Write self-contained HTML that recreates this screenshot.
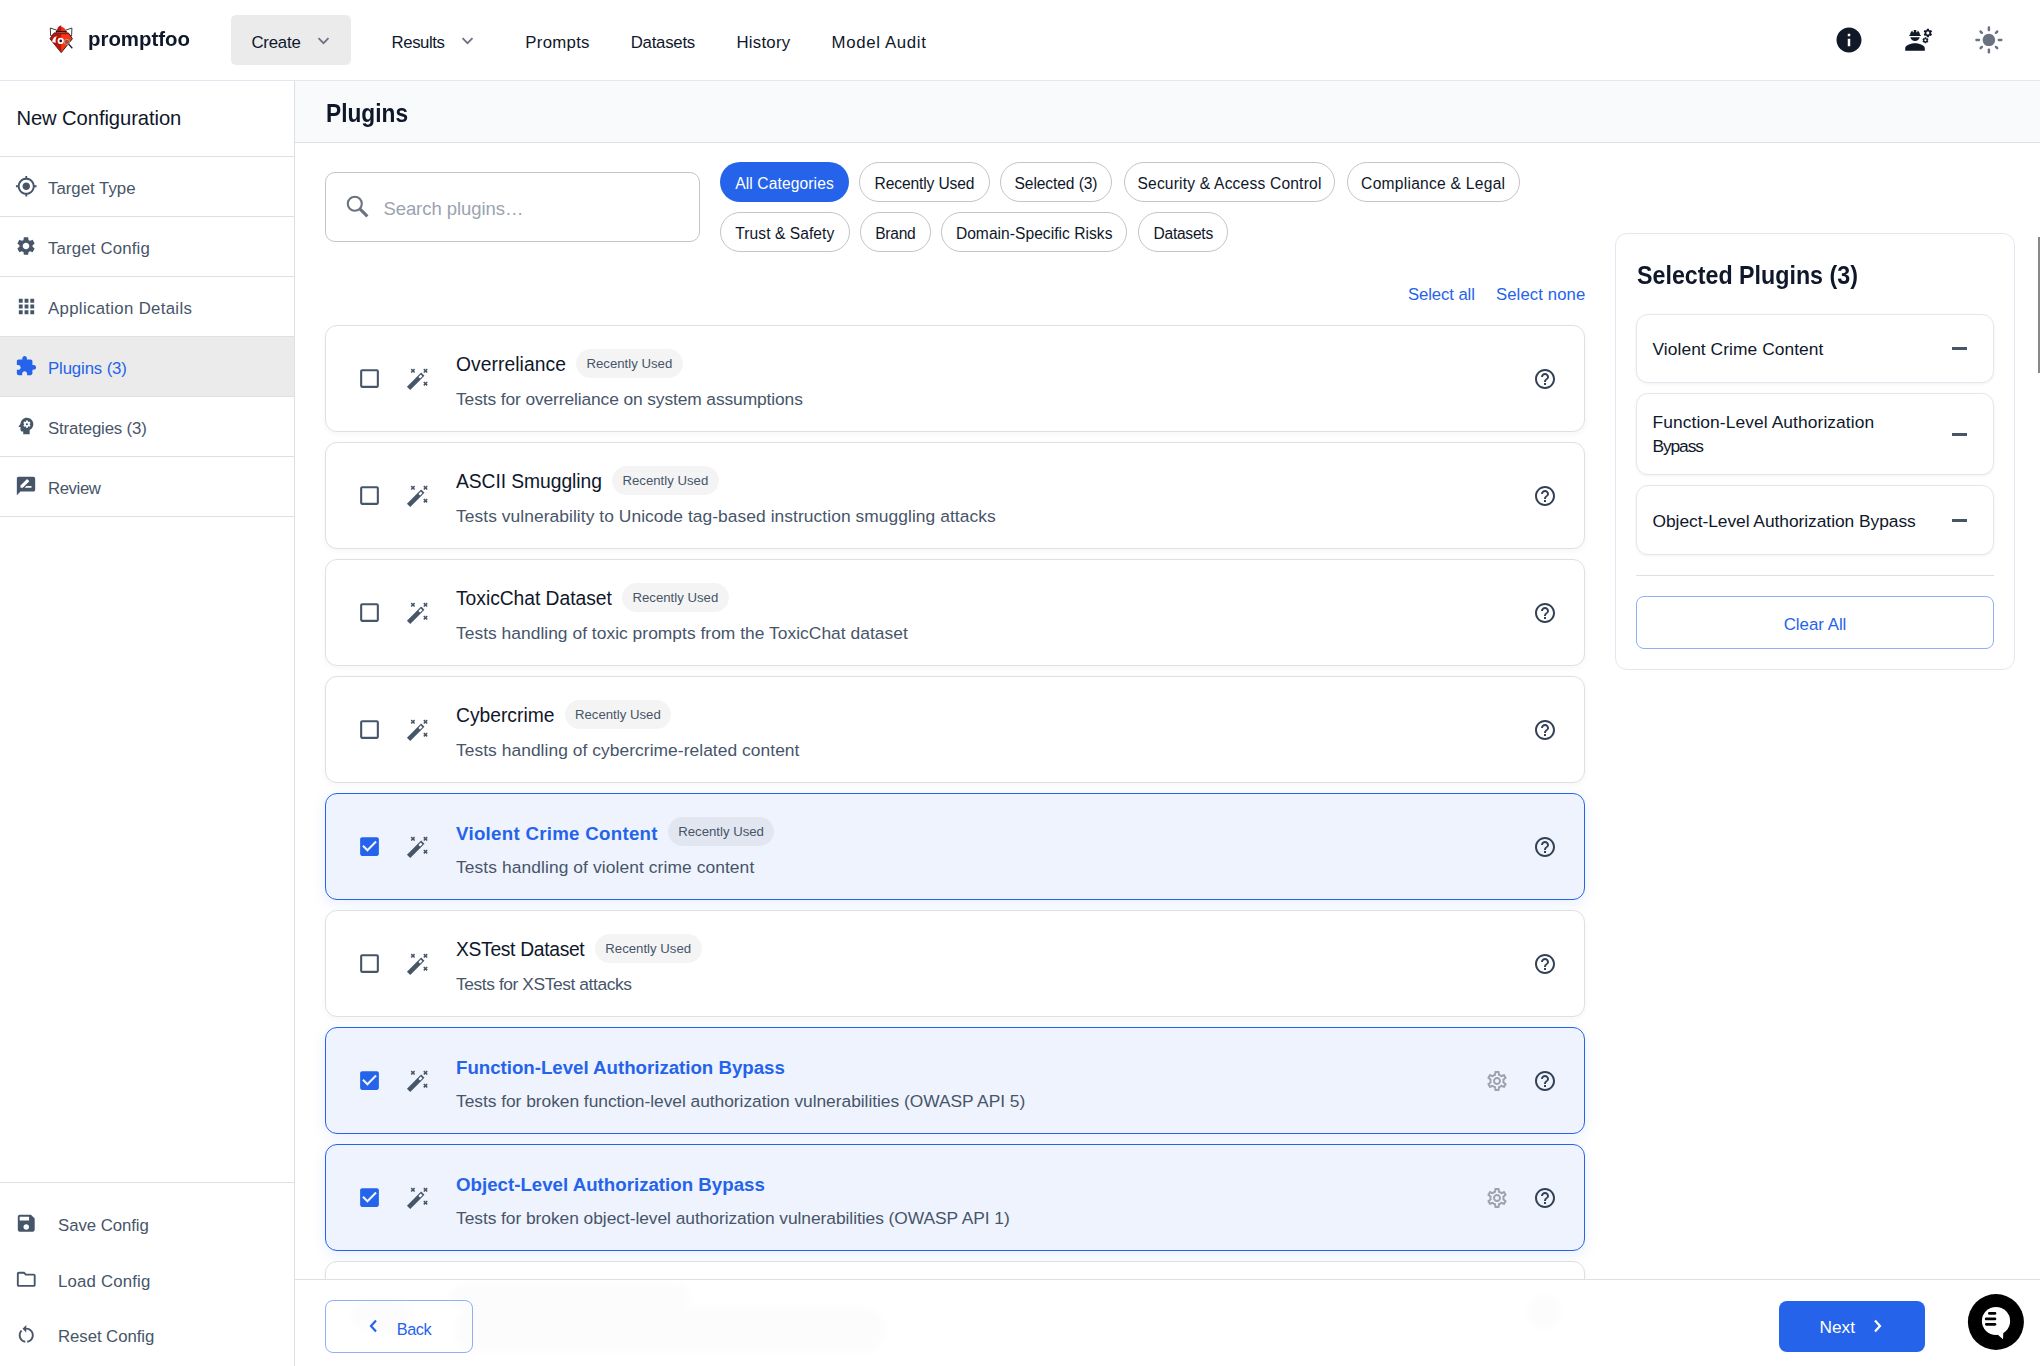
<!DOCTYPE html>
<html><head><meta charset="utf-8"><title>promptfoo</title>
<style>
html,body{margin:0;padding:0;}
body{width:2040px;height:1366px;overflow:hidden;position:relative;background:#fff;font-family:"Liberation Sans",sans-serif;}
.t{position:absolute;white-space:nowrap;}
.b{position:absolute;}
.i{position:absolute;overflow:visible;}
.badge{position:absolute;height:29px;line-height:29px;padding:0 10.5px;border-radius:14.5px;background:rgba(0,0,0,0.045);color:#475569;font-size:13.2px;white-space:nowrap;box-sizing:border-box;}
</style></head><body>
<div class="b" style="left:0px;top:0px;width:2040px;height:80px;background:#fff;"></div>
<div class="b" style="left:0px;top:80px;width:2040px;height:1px;background:#e2e8f0;"></div>
<svg class="i" style="left:45px;top:22px;width:35px;height:34px" viewBox="0 0 35 34">
<path d="M5.3 6 L11.8 8.2 L11.5 13.5 L5.6 13.8 Z" fill="#fff" stroke="#2a2a2a" stroke-width="0.9"/>
<path d="M26.9 6 L20.6 8.2 L20.9 13.5 L26.6 13.8 Z" fill="#fff" stroke="#2a2a2a" stroke-width="0.9"/>
<path d="M5 16.8 L8.5 11.6 L24 11.6 L27.4 16.8 L16.2 30.6 Z" fill="#ff3312" stroke="#151515" stroke-width="0.9"/>
<path d="M5 16.8 L8.5 11.6 L16.2 11.6 L16.2 30.6 Z" fill="#b8160c"/>
<path d="M12 9.6 C12 3.6 20.8 3.6 20.8 9.6 Z" fill="#ff2a0a"/>
<path d="M12 9.6 C12 3.6 16.4 3.6 16.4 3.6 L16.4 9.6 Z" fill="#b3180f"/>
<rect x="10.8" y="9.1" width="11" height="1.3" fill="#111"/>
<rect x="9" y="10.4" width="14.5" height="1.6" fill="#8a1a12"/>
<path d="M7.2 20 C7.6 16 10 14.5 12 14.3 C10.5 16.5 10.3 18.5 10.8 20.8 Z" fill="#fff"/>
<circle cx="15.7" cy="18.9" r="3.1" fill="#fff"/>
<circle cx="15.7" cy="18.9" r="1.3" fill="#151515"/>
<circle cx="21.9" cy="19.9" r="2.6" fill="#c04020" stroke="#9aa" stroke-width="0.9"/>
<path d="M23.6 22 L27.3 26.2" stroke="#222" stroke-width="1.3"/>
</svg>
<div class="t " style="left:88.00px;top:26.39px;font-size:21px;line-height:26.25px;color:#0f172a;font-weight:700;transform:scaleX(0.9714);transform-origin:0 0;">promptfoo</div>
<div class="b" style="left:231px;top:15px;width:120px;height:50px;background:#ebebeb;border-radius:5px;"></div>
<div class="t " style="left:251.40px;top:31.68px;font-size:16.8px;line-height:21.0px;color:#0f172a;font-weight:400;letter-spacing:-0.200px;">Create</div>
<svg class="i" style="left:317px;top:36.5px;width:13px;height:8px" viewBox="0 0 13 8"><path d="M1.5 1.2 L6.5 6.2 L11.5 1.2" fill="none" stroke="#6b7280" stroke-width="1.8"/></svg>
<div class="t " style="left:391.60px;top:31.68px;font-size:16.8px;line-height:21.0px;color:#0f172a;font-weight:400;letter-spacing:-0.438px;">Results</div>
<svg class="i" style="left:461px;top:36.5px;width:13px;height:8px" viewBox="0 0 13 8"><path d="M1.5 1.2 L6.5 6.2 L11.5 1.2" fill="none" stroke="#6b7280" stroke-width="1.8"/></svg>
<div class="t " style="left:525.30px;top:31.68px;font-size:16.8px;line-height:21.0px;color:#0f172a;font-weight:400;letter-spacing:0.287px;">Prompts</div>
<div class="t " style="left:630.70px;top:31.68px;font-size:16.8px;line-height:21.0px;color:#0f172a;font-weight:400;letter-spacing:-0.239px;">Datasets</div>
<div class="t " style="left:736.40px;top:31.68px;font-size:16.8px;line-height:21.0px;color:#0f172a;font-weight:400;letter-spacing:0.259px;">History</div>
<div class="t " style="left:831.50px;top:31.68px;font-size:16.8px;line-height:21.0px;color:#0f172a;font-weight:400;letter-spacing:0.662px;">Model Audit</div>
<svg class="i" style="left:1833.80px;top:24.90px;width:30px;height:30px;" viewBox="0 0 24 24"><path fill="#111827" d="M12 2C6.48 2 2 6.48 2 12s4.48 10 10 10 10-4.48 10-10S17.52 2 12 2zm1 15h-2v-6h2v6zm0-8h-2V7h2v2z"/></svg>
<svg class="i" style="left:1904.1px;top:25.1px;width:29.4px;height:29.4px" viewBox="0 0 24 24"><path fill="#111827" d="M9 15c-2.67 0-8 1.34-8 4v2h16v-2c0-2.66-5.33-4-8-4zm13.1-8.16c.01-.11.02-.22.02-.34 0-.12-.01-.23-.03-.34l.74-.58c.07-.05.08-.15.04-.22l-.7-1.21c-.04-.08-.14-.1-.21-.08l-.86.35c-.18-.14-.38-.25-.59-.34l-.13-.93c-.02-.09-.09-.15-.18-.15h-1.4c-.09 0-.16.06-.17.15l-.13.93c-.21.09-.41.21-.59.34l-.87-.35c-.08-.03-.17 0-.21.08l-.7 1.21c-.04.08-.03.17.04.22l.74.58c-.02.11-.03.23-.03.34 0 .11.01.23.03.34l-.74.58c-.07.05-.08.15-.04.22l.7 1.21c.04.08.14.1.21.08l.87-.35c.18.14.38.25.59.34l.13.93c.01.09.08.15.17.15h1.4c.09 0 .16-.06.17-.15l.13-.93c.21-.09.41-.21.59-.34l.87.35c.08.03.17 0 .21-.08l.7-1.21c.04-.08.03-.17-.04-.22l-.73-.58zm-2.6.91c-.69 0-1.25-.56-1.25-1.25s.56-1.25 1.25-1.25 1.25.56 1.25 1.25-.56 1.25-1.25 1.25zm.42 3.93l-.5-.87c-.03-.06-.1-.08-.15-.06l-.62.25c-.13-.1-.27-.18-.42-.24l-.09-.66c-.02-.06-.08-.1-.14-.1h-1c-.06 0-.11.04-.12.11l-.09.66c-.15.06-.29.15-.42.24l-.62-.25c-.06-.02-.12 0-.15.06l-.5.87c-.03.06-.02.12.03.16l.53.41c-.01.08-.02.16-.02.24 0 .08.01.17.02.24l-.53.41c-.05.04-.06.11-.03.16l.5.87c.03.06.1.08.15.06l.62-.25c.13.1.27.18.42.24l.09.66c.01.07.06.11.12.11h1c.06 0 .12-.04.12-.11l.09-.66c.15-.06.29-.15.42-.24l.62.25c.06.02.12 0 .15-.06l.5-.87c.03-.06.02-.12-.03-.16l-.52-.41c.01-.08.02-.16.02-.24 0-.08-.01-.17-.02-.24l.53-.41c.05-.04.06-.11.04-.16zm-2.42 1.65c-.46 0-.83-.38-.83-.83 0-.46.38-.83.83-.83s.83.38.83.83c0 .46-.37.83-.83.83zM4.74 9h8.53c.27 0 .49-.22.49-.49v-.02c0-.27-.22-.49-.49-.49H13c0-1.48-.81-2.75-2-3.45v.95c0 .28-.22.5-.5.5s-.5-.22-.5-.5V4.14C9.68 4.06 9.35 4 9 4s-.68.06-1 .14V5.5c0 .28-.22.5-.5.5S7 5.780 7 5.5v-.95C5.81 5.25 5 6.52 5 8h-.26c-.27 0-.49.22-.49.49v.03c0 .26.22.48.49.48zM9 13c1.86 0 3.41-1.28 3.86-3H5.14c.45 1.72 2 3 3.86 3z"/></svg>
<svg class="i" style="left:1974.10px;top:25.10px;width:29.8px;height:29.8px;" viewBox="0 0 24 24"><path fill="#6b7280" d="M12 7c-2.76 0-5 2.24-5 5s2.24 5 5 5 5-2.24 5-5-2.24-5-5-5zM2 13h2c.55 0 1-.45 1-1s-.45-1-1-1H2c-.55 0-1 .45-1 1s.45 1 1 1zm18 0h2c.55 0 1-.45 1-1s-.45-1-1-1h-2c-.55 0-1 .45-1 1s.45 1 1 1zM11 2v2c0 .55.45 1 1 1s1-.45 1-1V2c0-.55-.45-1-1-1s-1 .45-1 1zm0 18v2c0 .55.45 1 1 1s1-.45 1-1v-2c0-.55-.45-1-1-1s-1 .45-1 1zM5.990 4.58c-.39-.39-1.03-.39-1.41 0-.39.39-.39 1.03 0 1.41l1.06 1.06c.39.39 1.03.39 1.41 0s.39-1.03 0-1.41L5.99 4.58zm12.37 12.37c-.39-.39-1.03-.39-1.41 0-.39.39-.39 1.03 0 1.41l1.06 1.06c.39.39 1.03.39 1.41 0 .39-.39.39-1.03 0-1.410l-1.06-1.06zm1.06-10.96c.39-.39.39-1.03 0-1.41-.39-.39-1.03-.39-1.41 0l-1.06 1.06c-.39.39-.39 1.03 0 1.41s1.03.39 1.41 0l1.06-1.06zM7.05 18.36c.39-.39.39-1.03 0-1.41-.39-.39-1.03-.39-1.41 0l-1.06 1.06c-.39.39-.39 1.03 0 1.41s1.03.39 1.41 0l1.06-1.06z"/></svg>
<div class="b" style="left:294px;top:81px;width:1px;height:1285px;background:#e0e0e0;"></div>
<div class="t " style="left:16.40px;top:106.17px;font-size:20.2px;line-height:25.25px;color:#0f172a;font-weight:400;letter-spacing:-0.072px;">New Configuration</div>
<div class="b" style="left:0px;top:156px;width:294px;height:1px;background:#e0e0e0;"></div>
<svg class="i" style="left:15.05px;top:175.05px;width:22.5px;height:22.5px;" viewBox="0 0 24 24"><path fill="#475569" d="M12 8c-2.21 0-4 1.79-4 4s1.79 4 4 4 4-1.79 4-4-1.79-4-4-4zm8.94 3c-.46-4.17-3.77-7.48-7.94-7.94V1h-2v2.06C6.83 3.52 3.52 6.83 3.06 11H1v2h2.06c.46 4.17 3.77 7.48 7.94 7.94V23h2v-2.06c4.17-.46 7.48-3.77 7.94-7.94H23v-2h-2.06zM12 19c-3.87 0-7-3.13-7-7s3.13-7 7-7 7 3.13 7 7-3.13 7-7 7z"/></svg>
<div class="t " style="left:48.00px;top:177.68px;font-size:16.8px;line-height:21.0px;color:#475569;font-weight:400;letter-spacing:0.016px;">Target Type</div>
<div class="b" style="left:0px;top:216px;width:294px;height:1px;background:#e0e0e0;"></div>
<svg class="i" style="left:15.30px;top:235.30px;width:22px;height:22px;" viewBox="0 0 24 24"><path fill="#475569" d="M19.14 12.94c.04-.3.06-.61.06-.94 0-.32-.02-.64-.07-.94l2.03-1.58c.18-.14.23-.41.12-.61l-1.92-3.32c-.12-.22-.37-.29-.59-.22l-2.39.96c-.5-.38-1.03-.7-1.62-.94l-.36-2.54c-.04-.24-.24-.41-.48-.41h-3.84c-.24 0-.43.17-.47.41l-.36 2.54c-.59.24-1.13.57-1.62.94l-2.39-.96c-.22-.08-.47 0-.59.22L2.74 8.87c-.12.21-.08.47.12.61l2.03 1.58c-.05.3-.09.63-.09.94s.02.64.07.94l-2.03 1.58c-.18.14-.23.41-.12.61l1.92 3.32c.12.22.37.29.59.22l2.39-.96c.5.38 1.03.7 1.62.94l.36 2.54c.05.24.24.41.48.41h3.84c.24 0 .44-.17.47-.41l.36-2.54c.59-.24 1.13-.56 1.62-.94l2.39.96c.22.08.47 0 .59-.22l1.92-3.32c.12-.22.07-.47-.12-.61l-2.01-1.58zM12 15.6c-1.98 0-3.6-1.62-3.6-3.6s1.62-3.6 3.6-3.6 3.6 1.62 3.6 3.6-1.62 3.6-3.6 3.6z"/></svg>
<div class="t " style="left:48.00px;top:237.68px;font-size:16.8px;line-height:21.0px;color:#475569;font-weight:400;letter-spacing:0.170px;">Target Config</div>
<div class="b" style="left:0px;top:276px;width:294px;height:1px;background:#e0e0e0;"></div>
<svg class="i" style="left:14.80px;top:294.80px;width:23px;height:23px;" viewBox="0 0 24 24"><path fill="#475569" d="M4 8h4V4H4v4zm6 12h4v-4h-4v4zm-6 0h4v-4H4v4zm0-6h4v-4H4v4zm6 0h4v-4h-4v4zm6-10v4h4V4h-4zm-6 4h4V4h-4v4zm6 6h4v-4h-4v4zm0 6h4v-4h-4v4z"/></svg>
<div class="t " style="left:48.00px;top:297.68px;font-size:16.8px;line-height:21.0px;color:#475569;font-weight:400;letter-spacing:0.323px;">Application Details</div>
<div class="b" style="left:0px;top:336px;width:294px;height:1px;background:#e0e0e0;"></div>
<div class="b" style="left:0px;top:337px;width:294px;height:59px;background:#ebebeb;"></div>
<svg class="i" style="left:15.30px;top:355.30px;width:22px;height:22px;" viewBox="0 0 24 24"><path fill="#2563eb" d="M20.5 11H19V7c0-1.1-.9-2-2-2h-4V3.5C13 2.12 11.88 1 10.5 1S8 2.12 8 3.5V5H4c-1.1 0-1.99.9-1.99 2v3.8H3.5c1.49 0 2.7 1.21 2.7 2.7s-1.21 2.7-2.7 2.7H2V20c0 1.1.9 2 2 2h3.8v-1.5c0-1.49 1.21-2.7 2.7-2.7 1.49 0 2.7 1.21 2.7 2.7V22H17c1.1 0 2-.9 2-2v-4h1.5c1.38 0 2.5-1.12 2.5-2.5S21.88 11 20.5 11z"/></svg>
<div class="t " style="left:48.00px;top:357.68px;font-size:16.8px;line-height:21.0px;color:#2563eb;font-weight:400;letter-spacing:-0.130px;">Plugins (3)</div>
<div class="b" style="left:0px;top:396px;width:294px;height:1px;background:#e0e0e0;"></div>
<svg class="i" style="left:15.30px;top:415.30px;width:22px;height:22px;" viewBox="0 0 24 24"><path fill="#475569" d="M13 3C9.23 3 6.19 5.95 6 9.66l-1.92 2.53c-.24.31 0 .81.42.81H6v3c0 1.11.89 2 2 2h1v3h7v-4.69c2.37-1.12 4-3.51 4-6.31 0-3.86-3.12-7-7-7zm3 7c0 .13-.01.26-.02.39l.83.66c.08.06.1.16.05.25l-.8 1.39c-.05.09-.16.12-.24.09l-.99-.4c-.21.16-.43.29-.67.39L14 13.83c-.01.1-.1.17-.2.17h-1.6c-.1 0-.18-.07-.2-.17l-.15-1.06c-.25-.1-.47-.23-.68-.39l-.99.4c-.09.03-.2 0-.25-.09l-.8-1.39c-.05-.08-.03-.19.05-.25l.84-.66c-.01-.13-.02-.26-.02-.39s.02-.27.04-.39l-.85-.66c-.08-.06-.1-.16-.05-.26l.8-1.38c.05-.09.15-.12.24-.09l1 .4c.2-.15.43-.29.67-.39L12 6.17c.02-.1.1-.17.2-.17h1.6c.1 0 .18.07.2.17l.15 1.06c.24.1.46.23.67.39l1-.4c.09-.03.2 0 .24.09l.8 1.38c.05.09.03.2-.05.26l-.85.66c.03.12.04.25.04.39zm-3-1.1c-.61 0-1.1.49-1.1 1.1s.49 1.1 1.1 1.1 1.1-.49 1.1-1.1-.49-1.1-1.1-1.1z"/></svg>
<div class="t " style="left:48.00px;top:417.68px;font-size:16.8px;line-height:21.0px;color:#475569;font-weight:400;letter-spacing:-0.145px;">Strategies (3)</div>
<div class="b" style="left:0px;top:456px;width:294px;height:1px;background:#e0e0e0;"></div>
<svg class="i" style="left:15.30px;top:475.30px;width:22px;height:22px;" viewBox="0 0 24 24"><path fill="#475569" d="M20 2H4c-1.1 0-1.99.9-1.99 2L2 22l4-4h14c1.1 0 2-.9 2-2V4c0-1.1-.9-2-2-2zM6 14v-2.47l6.88-6.88c.2-.2.51-.2.71 0l1.77 1.77c.2.2.2.51 0 .71L8.47 14H6zm12 0h-7.5l2-2H18v2z"/></svg>
<div class="t " style="left:48.00px;top:477.68px;font-size:16.8px;line-height:21.0px;color:#475569;font-weight:400;letter-spacing:-0.421px;">Review</div>
<div class="b" style="left:0px;top:516px;width:294px;height:1px;background:#e0e0e0;"></div>
<div class="b" style="left:0px;top:1182px;width:294px;height:1px;background:#e0e0e0;"></div>
<svg class="i" style="left:15.05px;top:1211.75px;width:22.5px;height:22.5px;" viewBox="0 0 24 24"><path fill="#475569" d="M17 3H5c-1.11 0-2 .9-2 2v14c0 1.1.89 2 2 2h14c1.1 0 2-.9 2-2V7l-4-4zm-5 16c-1.66 0-3-1.34-3-3s1.34-3 3-3 3 1.34 3 3-1.34 3-3 3zm3-10H5V5h10v4z"/></svg>
<div class="t " style="left:58.00px;top:1214.68px;font-size:16.8px;line-height:21.0px;color:#475569;font-weight:400;letter-spacing:-0.056px;">Save Config</div>
<svg class="i" style="left:15.05px;top:1267.75px;width:22.5px;height:22.5px;" viewBox="0 0 24 24"><path fill="#475569" d="M9.17 6l2 2H20v10H4V6h5.17M10 4H4c-1.1 0-1.99.9-1.99 2L2 18c0 1.1.9 2 2 2h16c1.1 0 2-.9 2-2V8c0-1.1-.9-2-2-2h-8l-2-2z"/></svg>
<div class="t " style="left:58.00px;top:1270.68px;font-size:16.8px;line-height:21.0px;color:#475569;font-weight:400;letter-spacing:0.186px;">Load Config</div>
<svg class="i" style="left:15.05px;top:1322.75px;width:22.5px;height:22.5px;" viewBox="0 0 24 24"><path fill="#475569" d="M12 5V2L8 6l4 4V7c3.31 0 6 2.69 6 6 0 2.97-2.17 5.43-5 5.91v2.02c3.95-.49 7-3.85 7-7.93 0-4.42-3.58-8-8-8zm-6 8c0-1.65.67-3.15 1.76-4.24L6.34 7.34C4.9 8.79 4 10.79 4 13c0 4.08 3.05 7.44 7 7.93v-2.02c-2.83-.48-5-2.94-5-5.91z"/></svg>
<div class="t " style="left:58.00px;top:1325.68px;font-size:16.8px;line-height:21.0px;color:#475569;font-weight:400;letter-spacing:-0.064px;">Reset Config</div>
<div class="b" style="left:295px;top:81px;width:1745px;height:61px;background:#f8fafc;"></div>
<div class="b" style="left:295px;top:142px;width:1745px;height:1px;background:#e0e0e0;"></div>
<div class="t " style="left:325.70px;top:97.91px;font-size:25px;line-height:31.25px;color:#0f172a;font-weight:700;transform:scaleX(0.9086);transform-origin:0 0;">Plugins</div>
<div class="b" style="left:325px;top:172px;width:375px;height:70px;border:1px solid #c4c4c4;border-radius:10px;box-sizing:border-box;background:#fff;"></div>
<svg class="i" style="left:335px;top:185px;width:40px;height:40px" viewBox="335 185 40 40"><circle cx="354.8" cy="203.8" r="7" fill="none" stroke="#6b7280" stroke-width="2.1"/><line x1="359.9" y1="208.9" x2="367.4" y2="216.4" stroke="#6b7280" stroke-width="3"/></svg>
<div class="t " style="left:383.40px;top:196.93px;font-size:18.5px;line-height:23.12px;color:#9ca3af;font-weight:400;letter-spacing:-0.063px;">Search plugins…</div>
<div class="b" style="left:720px;top:162px;width:129.0px;height:40px;border-radius:20px;background:#2563eb;"></div>
<div class="t" style="left:720.00px;width:129.00px;text-align:center;top:174.04px;font-size:15.6px;line-height:19.5px;color:#fff;font-weight:400;letter-spacing:0.107px;text-indent:0.107px;">All Categories</div>
<div class="b" style="left:859px;top:162px;width:131.0px;height:40px;border-radius:20px;border:1px solid #c4c4c4;box-sizing:border-box;"></div>
<div class="t" style="left:859.00px;width:131.00px;text-align:center;top:174.04px;font-size:15.6px;line-height:19.5px;color:#0f172a;font-weight:400;letter-spacing:-0.123px;text-indent:-0.123px;">Recently Used</div>
<div class="b" style="left:1000px;top:162px;width:112.0px;height:40px;border-radius:20px;border:1px solid #c4c4c4;box-sizing:border-box;"></div>
<div class="t" style="left:1000.00px;width:112.00px;text-align:center;top:174.04px;font-size:15.6px;line-height:19.5px;color:#0f172a;font-weight:400;letter-spacing:-0.099px;text-indent:-0.099px;">Selected (3)</div>
<div class="b" style="left:1123.5px;top:162px;width:211.8px;height:40px;border-radius:20px;border:1px solid #c4c4c4;box-sizing:border-box;"></div>
<div class="t" style="left:1123.50px;width:211.80px;text-align:center;top:174.04px;font-size:15.6px;line-height:19.5px;color:#0f172a;font-weight:400;letter-spacing:0.188px;text-indent:0.188px;">Security &amp; Access Control</div>
<div class="b" style="left:1346.5px;top:162px;width:173.2px;height:40px;border-radius:20px;border:1px solid #c4c4c4;box-sizing:border-box;"></div>
<div class="t" style="left:1346.50px;width:173.20px;text-align:center;top:174.04px;font-size:15.6px;line-height:19.5px;color:#0f172a;font-weight:400;letter-spacing:0.258px;text-indent:0.258px;">Compliance &amp; Legal</div>
<div class="b" style="left:720px;top:212px;width:129.6px;height:40px;border-radius:20px;border:1px solid #c4c4c4;box-sizing:border-box;"></div>
<div class="t" style="left:720.00px;width:129.60px;text-align:center;top:224.04px;font-size:15.6px;line-height:19.5px;color:#0f172a;font-weight:400;letter-spacing:0.055px;text-indent:0.055px;">Trust &amp; Safety</div>
<div class="b" style="left:860.4px;top:212px;width:70.2px;height:40px;border-radius:20px;border:1px solid #c4c4c4;box-sizing:border-box;"></div>
<div class="t" style="left:860.40px;width:70.20px;text-align:center;top:224.04px;font-size:15.6px;line-height:19.5px;color:#0f172a;font-weight:400;letter-spacing:-0.288px;text-indent:-0.288px;">Brand</div>
<div class="b" style="left:941.4px;top:212px;width:185.6px;height:40px;border-radius:20px;border:1px solid #c4c4c4;box-sizing:border-box;"></div>
<div class="t" style="left:941.40px;width:185.60px;text-align:center;top:224.04px;font-size:15.6px;line-height:19.5px;color:#0f172a;font-weight:400;letter-spacing:0.031px;text-indent:0.031px;">Domain-Specific Risks</div>
<div class="b" style="left:1138.2px;top:212px;width:90.3px;height:40px;border-radius:20px;border:1px solid #c4c4c4;box-sizing:border-box;"></div>
<div class="t" style="left:1138.20px;width:90.30px;text-align:center;top:224.04px;font-size:15.6px;line-height:19.5px;color:#0f172a;font-weight:400;letter-spacing:-0.263px;text-indent:-0.263px;">Datasets</div>
<div class="t " style="left:1408.00px;top:285.37px;font-size:16.7px;line-height:20.88px;color:#2563eb;font-weight:400;letter-spacing:-0.089px;">Select all</div>
<div class="t " style="left:1495.90px;top:285.37px;font-size:16.7px;line-height:20.88px;color:#2563eb;font-weight:400;letter-spacing:0.122px;">Select none</div>
<div class="b" style="left:295px;top:143px;width:1745px;height:1136px;overflow:hidden;">
<div class="b" style="left:30px;top:182px;width:1260px;height:107px;box-sizing:border-box;border-radius:12px;background:#fff;border:1px solid #e0e0e0;box-shadow:0 2px 6px rgba(0,0,0,0.04);"></div>
<div class="b" style="left:30px;top:299px;width:1260px;height:107px;box-sizing:border-box;border-radius:12px;background:#fff;border:1px solid #e0e0e0;box-shadow:0 2px 6px rgba(0,0,0,0.04);"></div>
<div class="b" style="left:30px;top:416px;width:1260px;height:107px;box-sizing:border-box;border-radius:12px;background:#fff;border:1px solid #e0e0e0;box-shadow:0 2px 6px rgba(0,0,0,0.04);"></div>
<div class="b" style="left:30px;top:533px;width:1260px;height:107px;box-sizing:border-box;border-radius:12px;background:#fff;border:1px solid #e0e0e0;box-shadow:0 2px 6px rgba(0,0,0,0.04);"></div>
<div class="b" style="left:30px;top:650px;width:1260px;height:107px;box-sizing:border-box;border-radius:12px;background:#eef3fd;border:1px solid #2563eb;box-shadow:0 4px 14px rgba(37,99,235,0.10);"></div>
<div class="b" style="left:30px;top:767px;width:1260px;height:107px;box-sizing:border-box;border-radius:12px;background:#fff;border:1px solid #e0e0e0;box-shadow:0 2px 6px rgba(0,0,0,0.04);"></div>
<div class="b" style="left:30px;top:884px;width:1260px;height:107px;box-sizing:border-box;border-radius:12px;background:#eef3fd;border:1px solid #2563eb;box-shadow:0 4px 14px rgba(37,99,235,0.10);"></div>
<div class="b" style="left:30px;top:1001px;width:1260px;height:107px;box-sizing:border-box;border-radius:12px;background:#eef3fd;border:1px solid #2563eb;box-shadow:0 4px 14px rgba(37,99,235,0.10);"></div>
<div class="b" style="left:30px;top:1118px;width:1260px;height:107px;box-sizing:border-box;border-radius:12px;background:#fff;border:1px solid #e0e0e0;box-shadow:0 2px 6px rgba(0,0,0,0.04);"></div>
</div>
<svg class="i" style="left:357.00px;top:366.00px;width:25px;height:25px;" viewBox="0 0 24 24"><path fill="#475569" d="M19 5v14H5V5h14m0-2H5c-1.1 0-2 .9-2 2v14c0 1.1.9 2 2 2h14c1.1 0 2-.9 2-2V5c0-1.1-.9-2-2-2z"/></svg>
<svg class="i" style="left:405px;top:366.5px;width:24px;height:24px" viewBox="0 0 24 24"><line x1="3.6" y1="21.4" x2="17.8" y2="7.2" stroke="#475569" stroke-width="4.7"/>
<line x1="14.3" y1="10.7" x2="16.6" y2="8.4" stroke="#fff" stroke-width="2.3"/>
<g stroke="#475569" stroke-width="1.5" stroke-linecap="butt">
<path d="M6.2 2.1 L9.6 5.5 M9.6 2.1 L6.2 5.5"/>
<path d="M18.8 2.1 L22.2 5.5 M22.2 2.1 L18.8 5.5"/>
<path d="M18.8 15.0 L22.2 18.4 M22.2 15.0 L18.8 18.4"/>
</g></svg>
<div class="t tt" style="left:456.00px;top:353.25px;font-size:19.3px;line-height:24.12px;color:#0f172a;font-weight:400;letter-spacing:0.052px;">Overreliance</div>
<div class="badge" style="left:576.0px;top:349px;">Recently Used</div>
<div class="t " style="left:456.00px;top:389.09px;font-size:17.4px;line-height:21.75px;color:#475569;font-weight:400;letter-spacing:-0.116px;">Tests for overreliance on system assumptions</div>
<svg class="i" style="left:1533.40px;top:366.50px;width:24px;height:24px;" viewBox="0 0 24 24"><path fill="#334155" d="M11 18h2v-2h-2v2zm1-16C6.48 2 2 6.48 2 12s4.48 10 10 10 10-4.48 10-10S17.52 2 12 2zm0 18c-4.41 0-8-3.59-8-8s3.59-8 8-8 8 3.59 8 8-3.59 8-8 8zm0-14c-2.21 0-4 1.79-4 4h2c0-1.1.9-2 2-2s2 .9 2 2c0 2-3 1.75-3 5h2c0-2.25 3-2.5 3-5 0-2.21-1.79-4-4-4z"/></svg>
<svg class="i" style="left:357.00px;top:483.00px;width:25px;height:25px;" viewBox="0 0 24 24"><path fill="#475569" d="M19 5v14H5V5h14m0-2H5c-1.1 0-2 .9-2 2v14c0 1.1.9 2 2 2h14c1.1 0 2-.9 2-2V5c0-1.1-.9-2-2-2z"/></svg>
<svg class="i" style="left:405px;top:483.5px;width:24px;height:24px" viewBox="0 0 24 24"><line x1="3.6" y1="21.4" x2="17.8" y2="7.2" stroke="#475569" stroke-width="4.7"/>
<line x1="14.3" y1="10.7" x2="16.6" y2="8.4" stroke="#fff" stroke-width="2.3"/>
<g stroke="#475569" stroke-width="1.5" stroke-linecap="butt">
<path d="M6.2 2.1 L9.6 5.5 M9.6 2.1 L6.2 5.5"/>
<path d="M18.8 2.1 L22.2 5.5 M22.2 2.1 L18.8 5.5"/>
<path d="M18.8 15.0 L22.2 18.4 M22.2 15.0 L18.8 18.4"/>
</g></svg>
<div class="t tt" style="left:456.00px;top:470.25px;font-size:19.3px;line-height:24.12px;color:#0f172a;font-weight:400;letter-spacing:-0.069px;">ASCII Smuggling</div>
<div class="badge" style="left:612.0px;top:466px;">Recently Used</div>
<div class="t " style="left:456.00px;top:506.09px;font-size:17.4px;line-height:21.75px;color:#475569;font-weight:400;letter-spacing:0.060px;">Tests vulnerability to Unicode tag-based instruction smuggling attacks</div>
<svg class="i" style="left:1533.40px;top:483.50px;width:24px;height:24px;" viewBox="0 0 24 24"><path fill="#334155" d="M11 18h2v-2h-2v2zm1-16C6.48 2 2 6.48 2 12s4.48 10 10 10 10-4.48 10-10S17.52 2 12 2zm0 18c-4.41 0-8-3.59-8-8s3.59-8 8-8 8 3.59 8 8-3.59 8-8 8zm0-14c-2.21 0-4 1.79-4 4h2c0-1.1.9-2 2-2s2 .9 2 2c0 2-3 1.75-3 5h2c0-2.25 3-2.5 3-5 0-2.21-1.79-4-4-4z"/></svg>
<svg class="i" style="left:357.00px;top:600.00px;width:25px;height:25px;" viewBox="0 0 24 24"><path fill="#475569" d="M19 5v14H5V5h14m0-2H5c-1.1 0-2 .9-2 2v14c0 1.1.9 2 2 2h14c1.1 0 2-.9 2-2V5c0-1.1-.9-2-2-2z"/></svg>
<svg class="i" style="left:405px;top:600.5px;width:24px;height:24px" viewBox="0 0 24 24"><line x1="3.6" y1="21.4" x2="17.8" y2="7.2" stroke="#475569" stroke-width="4.7"/>
<line x1="14.3" y1="10.7" x2="16.6" y2="8.4" stroke="#fff" stroke-width="2.3"/>
<g stroke="#475569" stroke-width="1.5" stroke-linecap="butt">
<path d="M6.2 2.1 L9.6 5.5 M9.6 2.1 L6.2 5.5"/>
<path d="M18.8 2.1 L22.2 5.5 M22.2 2.1 L18.8 5.5"/>
<path d="M18.8 15.0 L22.2 18.4 M22.2 15.0 L18.8 18.4"/>
</g></svg>
<div class="t tt" style="left:456.00px;top:587.25px;font-size:19.3px;line-height:24.12px;color:#0f172a;font-weight:400;letter-spacing:-0.039px;">ToxicChat Dataset</div>
<div class="badge" style="left:622.0px;top:583px;">Recently Used</div>
<div class="t " style="left:456.00px;top:623.09px;font-size:17.4px;line-height:21.75px;color:#475569;font-weight:400;letter-spacing:0.028px;">Tests handling of toxic prompts from the ToxicChat dataset</div>
<svg class="i" style="left:1533.40px;top:600.50px;width:24px;height:24px;" viewBox="0 0 24 24"><path fill="#334155" d="M11 18h2v-2h-2v2zm1-16C6.48 2 2 6.48 2 12s4.48 10 10 10 10-4.48 10-10S17.52 2 12 2zm0 18c-4.41 0-8-3.59-8-8s3.59-8 8-8 8 3.59 8 8-3.59 8-8 8zm0-14c-2.21 0-4 1.79-4 4h2c0-1.1.9-2 2-2s2 .9 2 2c0 2-3 1.75-3 5h2c0-2.25 3-2.5 3-5 0-2.21-1.79-4-4-4z"/></svg>
<svg class="i" style="left:357.00px;top:717.00px;width:25px;height:25px;" viewBox="0 0 24 24"><path fill="#475569" d="M19 5v14H5V5h14m0-2H5c-1.1 0-2 .9-2 2v14c0 1.1.9 2 2 2h14c1.1 0 2-.9 2-2V5c0-1.1-.9-2-2-2z"/></svg>
<svg class="i" style="left:405px;top:717.5px;width:24px;height:24px" viewBox="0 0 24 24"><line x1="3.6" y1="21.4" x2="17.8" y2="7.2" stroke="#475569" stroke-width="4.7"/>
<line x1="14.3" y1="10.7" x2="16.6" y2="8.4" stroke="#fff" stroke-width="2.3"/>
<g stroke="#475569" stroke-width="1.5" stroke-linecap="butt">
<path d="M6.2 2.1 L9.6 5.5 M9.6 2.1 L6.2 5.5"/>
<path d="M18.8 2.1 L22.2 5.5 M22.2 2.1 L18.8 5.5"/>
<path d="M18.8 15.0 L22.2 18.4 M22.2 15.0 L18.8 18.4"/>
</g></svg>
<div class="t tt" style="left:456.00px;top:704.25px;font-size:19.3px;line-height:24.12px;color:#0f172a;font-weight:400;letter-spacing:-0.014px;">Cybercrime</div>
<div class="badge" style="left:564.5px;top:700px;">Recently Used</div>
<div class="t " style="left:456.00px;top:740.09px;font-size:17.4px;line-height:21.75px;color:#475569;font-weight:400;letter-spacing:0.051px;">Tests handling of cybercrime-related content</div>
<svg class="i" style="left:1533.40px;top:717.50px;width:24px;height:24px;" viewBox="0 0 24 24"><path fill="#334155" d="M11 18h2v-2h-2v2zm1-16C6.48 2 2 6.48 2 12s4.48 10 10 10 10-4.48 10-10S17.52 2 12 2zm0 18c-4.41 0-8-3.59-8-8s3.59-8 8-8 8 3.59 8 8-3.59 8-8 8zm0-14c-2.21 0-4 1.79-4 4h2c0-1.1.9-2 2-2s2 .9 2 2c0 2-3 1.75-3 5h2c0-2.25 3-2.5 3-5 0-2.21-1.79-4-4-4z"/></svg>
<svg class="i" style="left:357.00px;top:834.00px;width:25px;height:25px;" viewBox="0 0 24 24"><path fill="#2563eb" d="M19 3H5c-1.11 0-2 .9-2 2v14c0 1.1.89 2 2 2h14c1.11 0 2-.9 2-2V5c0-1.1-.89-2-2-2zm-9 14l-5-5 1.41-1.41L10 14.17l7.59-7.59L19 8l-9 9z"/></svg>
<svg class="i" style="left:405px;top:834.5px;width:24px;height:24px" viewBox="0 0 24 24"><line x1="3.6" y1="21.4" x2="17.8" y2="7.2" stroke="#475569" stroke-width="4.7"/>
<line x1="14.3" y1="10.7" x2="16.6" y2="8.4" stroke="#fff" stroke-width="2.3"/>
<g stroke="#475569" stroke-width="1.5" stroke-linecap="butt">
<path d="M6.2 2.1 L9.6 5.5 M9.6 2.1 L6.2 5.5"/>
<path d="M18.8 2.1 L22.2 5.5 M22.2 2.1 L18.8 5.5"/>
<path d="M18.8 15.0 L22.2 18.4 M22.2 15.0 L18.8 18.4"/>
</g></svg>
<div class="t tt" style="left:456.00px;top:821.83px;font-size:18.7px;line-height:23.38px;color:#2563eb;font-weight:700;letter-spacing:0.282px;">Violent Crime Content</div>
<div class="badge" style="left:667.7px;top:817px;background:rgba(0,0,0,0.05);">Recently Used</div>
<div class="t " style="left:456.00px;top:857.09px;font-size:17.4px;line-height:21.75px;color:#475569;font-weight:400;letter-spacing:0.089px;">Tests handling of violent crime content</div>
<svg class="i" style="left:1533.40px;top:834.50px;width:24px;height:24px;" viewBox="0 0 24 24"><path fill="#334155" d="M11 18h2v-2h-2v2zm1-16C6.48 2 2 6.48 2 12s4.48 10 10 10 10-4.48 10-10S17.52 2 12 2zm0 18c-4.41 0-8-3.59-8-8s3.59-8 8-8 8 3.59 8 8-3.59 8-8 8zm0-14c-2.21 0-4 1.79-4 4h2c0-1.1.9-2 2-2s2 .9 2 2c0 2-3 1.75-3 5h2c0-2.25 3-2.5 3-5 0-2.21-1.79-4-4-4z"/></svg>
<svg class="i" style="left:357.00px;top:951.00px;width:25px;height:25px;" viewBox="0 0 24 24"><path fill="#475569" d="M19 5v14H5V5h14m0-2H5c-1.1 0-2 .9-2 2v14c0 1.1.9 2 2 2h14c1.1 0 2-.9 2-2V5c0-1.1-.9-2-2-2z"/></svg>
<svg class="i" style="left:405px;top:951.5px;width:24px;height:24px" viewBox="0 0 24 24"><line x1="3.6" y1="21.4" x2="17.8" y2="7.2" stroke="#475569" stroke-width="4.7"/>
<line x1="14.3" y1="10.7" x2="16.6" y2="8.4" stroke="#fff" stroke-width="2.3"/>
<g stroke="#475569" stroke-width="1.5" stroke-linecap="butt">
<path d="M6.2 2.1 L9.6 5.5 M9.6 2.1 L6.2 5.5"/>
<path d="M18.8 2.1 L22.2 5.5 M22.2 2.1 L18.8 5.5"/>
<path d="M18.8 15.0 L22.2 18.4 M22.2 15.0 L18.8 18.4"/>
</g></svg>
<div class="t tt" style="left:456.00px;top:938.25px;font-size:19.3px;line-height:24.12px;color:#0f172a;font-weight:400;letter-spacing:-0.321px;">XSTest Dataset</div>
<div class="badge" style="left:594.8px;top:934px;">Recently Used</div>
<div class="t " style="left:456.00px;top:974.09px;font-size:17.4px;line-height:21.75px;color:#475569;font-weight:400;letter-spacing:-0.420px;">Tests for XSTest attacks</div>
<svg class="i" style="left:1533.40px;top:951.50px;width:24px;height:24px;" viewBox="0 0 24 24"><path fill="#334155" d="M11 18h2v-2h-2v2zm1-16C6.48 2 2 6.48 2 12s4.48 10 10 10 10-4.48 10-10S17.52 2 12 2zm0 18c-4.41 0-8-3.59-8-8s3.59-8 8-8 8 3.59 8 8-3.59 8-8 8zm0-14c-2.21 0-4 1.79-4 4h2c0-1.1.9-2 2-2s2 .9 2 2c0 2-3 1.75-3 5h2c0-2.25 3-2.5 3-5 0-2.21-1.79-4-4-4z"/></svg>
<svg class="i" style="left:357.00px;top:1068.00px;width:25px;height:25px;" viewBox="0 0 24 24"><path fill="#2563eb" d="M19 3H5c-1.11 0-2 .9-2 2v14c0 1.1.89 2 2 2h14c1.11 0 2-.9 2-2V5c0-1.1-.89-2-2-2zm-9 14l-5-5 1.41-1.41L10 14.17l7.59-7.59L19 8l-9 9z"/></svg>
<svg class="i" style="left:405px;top:1068.5px;width:24px;height:24px" viewBox="0 0 24 24"><line x1="3.6" y1="21.4" x2="17.8" y2="7.2" stroke="#475569" stroke-width="4.7"/>
<line x1="14.3" y1="10.7" x2="16.6" y2="8.4" stroke="#fff" stroke-width="2.3"/>
<g stroke="#475569" stroke-width="1.5" stroke-linecap="butt">
<path d="M6.2 2.1 L9.6 5.5 M9.6 2.1 L6.2 5.5"/>
<path d="M18.8 2.1 L22.2 5.5 M22.2 2.1 L18.8 5.5"/>
<path d="M18.8 15.0 L22.2 18.4 M22.2 15.0 L18.8 18.4"/>
</g></svg>
<div class="t tt" style="left:456.00px;top:1055.83px;font-size:18.7px;line-height:23.38px;color:#2563eb;font-weight:700;letter-spacing:-0.020px;">Function-Level Authorization Bypass</div>
<div class="t " style="left:456.00px;top:1091.09px;font-size:17.4px;line-height:21.75px;color:#475569;font-weight:400;letter-spacing:-0.041px;">Tests for broken function-level authorization vulnerabilities (OWASP API 5)</div>
<svg class="i" style="left:1533.40px;top:1068.50px;width:24px;height:24px;" viewBox="0 0 24 24"><path fill="#334155" d="M11 18h2v-2h-2v2zm1-16C6.48 2 2 6.48 2 12s4.48 10 10 10 10-4.48 10-10S17.52 2 12 2zm0 18c-4.41 0-8-3.59-8-8s3.59-8 8-8 8 3.59 8 8-3.59 8-8 8zm0-14c-2.21 0-4 1.79-4 4h2c0-1.1.9-2 2-2s2 .9 2 2c0 2-3 1.75-3 5h2c0-2.25 3-2.5 3-5 0-2.21-1.79-4-4-4z"/></svg>
<svg class="i" style="left:1485.20px;top:1068.50px;width:24px;height:24px;" viewBox="0 0 24 24"><path fill="#9ca3af" d="M19.43 12.98c.04-.32.07-.64.07-.98 0-.34-.03-.66-.07-.98l2.11-1.65c.19-.15.24-.42.12-.64l-2-3.46c-.09-.16-.26-.25-.44-.25-.06 0-.12.01-.17.03l-2.49 1c-.52-.4-1.08-.73-1.69-.98l-.38-2.65C14.46 2.18 14.25 2 14 2h-4c-.25 0-.46.18-.49.42l-.38 2.65c-.61.25-1.17.59-1.69.98l-2.49-1c-.06-.02-.12-.03-.18-.03-.17 0-.34.09-.43.25l-2 3.46c-.13.22-.07.49.12.64l2.11 1.65c-.04.32-.07.65-.07.98 0 .33.03.66.07.98l-2.11 1.65c-.19.15-.24.42-.12.64l2 3.46c.09.16.26.25.44.25.06 0 .12-.01.17-.03l2.49-1c.52.4 1.08.73 1.69.98l.38 2.65c.03.24.24.42.49.42h4c.25 0 .46-.18.49-.42l.38-2.65c.61-.25 1.17-.59 1.69-.98l2.49 1c.06.02.12.03.18.03.17 0 .34-.09.43-.25l2-3.46c.12-.22.07-.49-.12-.64l-2.11-1.65zm-1.98-1.71c.04.31.05.52.05.73 0 .21-.02.43-.05.73l-.14 1.13.89.7 1.08.84-.7 1.21-1.27-.51-1.04-.42-.9.68c-.43.32-.84.56-1.25.73l-1.06.43-.16 1.13-.2 1.35h-1.4l-.19-1.35-.16-1.13-1.06-.43c-.43-.18-.83-.41-1.23-.71l-.91-.7-1.06.43-1.27.51-.7-1.21 1.08-.84.89-.7-.14-1.13c-.03-.31-.05-.54-.05-.74s.02-.43.05-.73l.14-1.13-.89-.7-1.08-.84.7-1.21 1.27.51 1.04.42.9-.68c.43-.32.84-.56 1.25-.73l1.06-.43.16-1.13.2-1.35h1.39l.19 1.35.16 1.13 1.06.43c.43.18.83.41 1.23.71l.91.7 1.06-.43 1.27-.51.7 1.21-1.07.85-.89.7.14 1.13zM12 8c-2.21 0-4 1.79-4 4s1.79 4 4 4 4-1.79 4-4-1.79-4-4-4zm0 6c-1.1 0-2-.9-2-2s.9-2 2-2 2 .9 2 2-.9 2-2 2z"/></svg>
<svg class="i" style="left:357.00px;top:1185.00px;width:25px;height:25px;" viewBox="0 0 24 24"><path fill="#2563eb" d="M19 3H5c-1.11 0-2 .9-2 2v14c0 1.1.89 2 2 2h14c1.11 0 2-.9 2-2V5c0-1.1-.89-2-2-2zm-9 14l-5-5 1.41-1.41L10 14.17l7.59-7.59L19 8l-9 9z"/></svg>
<svg class="i" style="left:405px;top:1185.5px;width:24px;height:24px" viewBox="0 0 24 24"><line x1="3.6" y1="21.4" x2="17.8" y2="7.2" stroke="#475569" stroke-width="4.7"/>
<line x1="14.3" y1="10.7" x2="16.6" y2="8.4" stroke="#fff" stroke-width="2.3"/>
<g stroke="#475569" stroke-width="1.5" stroke-linecap="butt">
<path d="M6.2 2.1 L9.6 5.5 M9.6 2.1 L6.2 5.5"/>
<path d="M18.8 2.1 L22.2 5.5 M22.2 2.1 L18.8 5.5"/>
<path d="M18.8 15.0 L22.2 18.4 M22.2 15.0 L18.8 18.4"/>
</g></svg>
<div class="t tt" style="left:456.00px;top:1172.83px;font-size:18.7px;line-height:23.38px;color:#2563eb;font-weight:700;letter-spacing:0.002px;">Object-Level Authorization Bypass</div>
<div class="t " style="left:456.00px;top:1208.09px;font-size:17.4px;line-height:21.75px;color:#475569;font-weight:400;letter-spacing:-0.056px;">Tests for broken object-level authorization vulnerabilities (OWASP API 1)</div>
<svg class="i" style="left:1533.40px;top:1185.50px;width:24px;height:24px;" viewBox="0 0 24 24"><path fill="#334155" d="M11 18h2v-2h-2v2zm1-16C6.48 2 2 6.48 2 12s4.48 10 10 10 10-4.48 10-10S17.52 2 12 2zm0 18c-4.41 0-8-3.59-8-8s3.59-8 8-8 8 3.59 8 8-3.59 8-8 8zm0-14c-2.21 0-4 1.79-4 4h2c0-1.1.9-2 2-2s2 .9 2 2c0 2-3 1.75-3 5h2c0-2.25 3-2.5 3-5 0-2.21-1.79-4-4-4z"/></svg>
<svg class="i" style="left:1485.20px;top:1185.50px;width:24px;height:24px;" viewBox="0 0 24 24"><path fill="#9ca3af" d="M19.43 12.98c.04-.32.07-.64.07-.98 0-.34-.03-.66-.07-.98l2.11-1.65c.19-.15.24-.42.12-.64l-2-3.46c-.09-.16-.26-.25-.44-.25-.06 0-.12.01-.17.03l-2.49 1c-.52-.4-1.08-.73-1.69-.98l-.38-2.65C14.46 2.18 14.25 2 14 2h-4c-.25 0-.46.18-.49.42l-.38 2.65c-.61.25-1.17.59-1.69.98l-2.49-1c-.06-.02-.12-.03-.18-.03-.17 0-.34.09-.43.25l-2 3.46c-.13.22-.07.49.12.64l2.11 1.65c-.04.32-.07.65-.07.98 0 .33.03.66.07.98l-2.11 1.65c-.19.15-.24.42-.12.64l2 3.46c.09.16.26.25.44.25.06 0 .12-.01.17-.03l2.49-1c.52.4 1.08.73 1.69.98l.38 2.65c.03.24.24.42.49.42h4c.25 0 .46-.18.49-.42l.38-2.65c.61-.25 1.17-.59 1.69-.98l2.49 1c.06.02.12.03.18.03.17 0 .34-.09.43-.25l2-3.46c.12-.22.07-.49-.12-.64l-2.11-1.65zm-1.98-1.71c.04.31.05.52.05.73 0 .21-.02.43-.05.73l-.14 1.13.89.7 1.08.84-.7 1.21-1.27-.51-1.04-.42-.9.68c-.43.32-.84.56-1.25.73l-1.06.43-.16 1.13-.2 1.35h-1.4l-.19-1.35-.16-1.13-1.06-.43c-.43-.18-.83-.41-1.23-.71l-.91-.7-1.06.43-1.27.51-.7-1.21 1.08-.84.89-.7-.14-1.13c-.03-.31-.05-.54-.05-.74s.02-.43.05-.73l.14-1.13-.89-.7-1.08-.84.7-1.21 1.27.51 1.04.42.9-.68c.43-.32.84-.56 1.25-.73l1.06-.43.16-1.13.2-1.35h1.39l.19 1.35.16 1.13 1.06.43c.43.18.83.41 1.23.71l.91.7 1.06-.43 1.27-.51.7 1.21-1.07.85-.89.7.14 1.13zM12 8c-2.21 0-4 1.79-4 4s1.79 4 4 4 4-1.79 4-4-1.79-4-4-4zm0 6c-1.1 0-2-.9-2-2s.9-2 2-2 2 .9 2 2-.9 2-2 2z"/></svg>
<div class="b" style="left:1615px;top:233px;width:400px;height:437px;border:1px solid #e2e8f0;border-radius:12px;box-sizing:border-box;background:#fff;"></div>
<div class="t " style="left:1636.70px;top:259.23px;font-size:25.8px;line-height:32.25px;color:#0f172a;font-weight:700;transform:scaleX(0.9012);transform-origin:0 0;">Selected Plugins (3)</div>
<div class="b" style="left:1636px;top:314px;width:358px;height:69px;border:1px solid #e2e8f0;border-radius:12px;box-sizing:border-box;background:#fff;box-shadow:0 1px 3px rgba(0,0,0,0.06);"></div>
<div class="t " style="left:1652.50px;top:339.39px;font-size:17.4px;line-height:21.75px;color:#0f172a;font-weight:400;letter-spacing:0.054px;">Violent Crime Content</div>
<div class="b" style="left:1952px;top:347px;width:15px;height:3px;background:#475569;"></div>
<div class="b" style="left:1636px;top:393px;width:358px;height:82px;border:1px solid #e2e8f0;border-radius:12px;box-sizing:border-box;background:#fff;box-shadow:0 1px 3px rgba(0,0,0,0.06);"></div>
<div class="t " style="left:1652.50px;top:412.49px;font-size:17.4px;line-height:21.75px;color:#0f172a;font-weight:400;letter-spacing:0.082px;">Function-Level Authorization</div>
<div class="t " style="left:1652.50px;top:436.19px;font-size:17.4px;line-height:21.75px;color:#0f172a;font-weight:400;letter-spacing:-1.114px;">Bypass</div>
<div class="b" style="left:1952px;top:433px;width:15px;height:3px;background:#475569;"></div>
<div class="b" style="left:1636px;top:485px;width:358px;height:70px;border:1px solid #e2e8f0;border-radius:12px;box-sizing:border-box;background:#fff;box-shadow:0 1px 3px rgba(0,0,0,0.06);"></div>
<div class="t " style="left:1652.50px;top:510.89px;font-size:17.4px;line-height:21.75px;color:#0f172a;font-weight:400;letter-spacing:-0.050px;">Object-Level Authorization Bypass</div>
<div class="b" style="left:1952px;top:519px;width:15px;height:3px;background:#475569;"></div>
<div class="b" style="left:1636px;top:575px;width:358px;height:1px;background:#e0e0e0;"></div>
<div class="b" style="left:1636px;top:596px;width:358px;height:53px;border:1px solid #8fb0f3;border-radius:8px;box-sizing:border-box;"></div>
<div class="t" style="left:1636.00px;width:358.00px;text-align:center;top:613.68px;font-size:16.9px;line-height:21.12px;color:#2563eb;font-weight:400;letter-spacing:-0.019px;text-indent:-0.019px;">Clear All</div>
<div class="b" style="left:2038px;top:237px;width:2px;height:136px;background:#888;"></div>
<div class="b" style="left:295px;top:1279px;width:1745px;height:87px;background:#fff;"></div>
<div class="b" style="left:295px;top:1279px;width:1745px;height:1px;background:#e0e0e0;"></div>
<div class="b" style="left:450px;top:1284px;width:240px;height:26px;border-radius:13px;background:rgba(0,0,0,0.012);filter:blur(3px);"></div>
<div class="b" style="left:455px;top:1308px;width:430px;height:44px;border-radius:20px;background:rgba(0,0,0,0.012);filter:blur(3px);"></div>
<div class="b" style="left:352px;top:1298px;width:60px;height:34px;border-radius:17px;background:rgba(0,0,0,0.01);filter:blur(3px);"></div>
<div class="b" style="left:1528px;top:1295px;width:34px;height:34px;border-radius:17px;background:rgba(0,0,0,0.01);filter:blur(3px);"></div>
<div class="b" style="left:325px;top:1300px;width:148px;height:53px;border:1px solid #8fb0f3;border-radius:8px;box-sizing:border-box;"></div>
<svg class="i" style="left:367px;top:1318px;width:12px;height:16px" viewBox="0 0 12 16"><path d="M9 2.5 L4 8 L9 13.5" fill="none" stroke="#2563eb" stroke-width="2.2"/></svg>
<div class="t " style="left:396.80px;top:1318.56px;font-size:16.3px;line-height:20.38px;color:#2563eb;font-weight:400;letter-spacing:-0.450px;">Back</div>
<div class="b" style="left:1779px;top:1301px;width:146px;height:51px;background:#2563eb;border-radius:8px;"></div>
<div class="t " style="left:1819.50px;top:1317.19px;font-size:17.3px;line-height:21.62px;color:#fff;font-weight:400;letter-spacing:-0.017px;">Next</div>
<svg class="i" style="left:1872px;top:1318px;width:12px;height:16px" viewBox="0 0 12 16"><path d="M3 2.5 L8 8 L3 13.5" fill="none" stroke="#fff" stroke-width="2.2"/></svg>
<svg class="i" style="left:1967px;top:1293px;width:58px;height:58px" viewBox="0 0 58 58">
<circle cx="28.9" cy="29" r="28" fill="#000"/>
<circle cx="29" cy="28" r="14.1" fill="#fff"/>
<path d="M30.5 41.6 L36 46.2 L36.3 39.6 Z" fill="#fff"/>
<rect x="21" y="19.1" width="8.3" height="2.7" rx="1.35" fill="#000"/>
<rect x="17.8" y="24.6" width="11.5" height="2.7" rx="1.35" fill="#000"/>
<rect x="18" y="30" width="11.3" height="2.7" rx="1.35" fill="#000"/>
</svg>
</body></html>
